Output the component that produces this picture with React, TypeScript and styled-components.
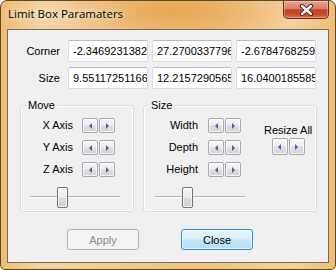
import React from "react";
import styled, { createGlobalStyle } from "styled-components";

const GlobalStyle = createGlobalStyle`
  html, body {
    margin: 0;
    padding: 0;
    background: #ffffff;
  }
  body {
    font-family: "Liberation Sans", Arial, sans-serif;
    font-size: 11px;
  }
`;

const S = {
  Window: styled.div`
    width: 336px;
    height: 270px;
    box-sizing: border-box;
    border: 1px solid #5e4626;
    border-radius: 7px 7px 5px 5px;
    overflow: hidden;
    display: flex;
    flex-direction: column;
    background:
      radial-gradient(ellipse 120px 34px at 172px 10px, rgba(230, 164, 80, 0.95), rgba(230, 164, 80, 0) 100%),
      linear-gradient(90deg, #eebc74 0%, #f4d3a4 12%, #f1c68b 45%, #f0c280 60%, #f4d0a0 88%, #eebc74 100%);
  `,
  TitleBar: styled.div`
    height: 28px;
    display: flex;
    align-items: flex-start;
    justify-content: space-between;
  `,
  Title: styled.span`
    font-family: "Open Sans", "Noto Sans", sans-serif;
    font-size: 11.5px;
    line-height: 14px;
    padding: 6px 0 0 7px;
    color: #000;
    text-shadow: 0 0 6px rgba(255, 248, 236, 0.95), 0 0 10px rgba(255, 248, 236, 0.8);
  `,
  CloseButton: styled.button`
    width: 46px;
    height: 18px;
    margin-right: 6px;
    padding: 0;
    box-sizing: border-box;
    border: 1px solid #6b2b1c;
    border-top: none;
    border-radius: 0 0 5px 5px;
    background: linear-gradient(#e9a895 0%, #d97c63 45%, #c3432a 52%, #c84a2e 78%, #e2704b 100%);
    box-shadow: inset 0 0 0 1px rgba(255, 255, 255, 0.3);
    display: flex;
    align-items: center;
    justify-content: center;
  `,
  Body: styled.div`
    flex: 1;
    display: flex;
    padding: 0 6px 6px;
  `,
  Client: styled.div`
    flex: 1;
    border: 1px solid #7c6a50;
    background: #f0f0f0;
    display: flex;
    flex-direction: column;
  `,
  CoordGrid: styled.div`
    display: grid;
    grid-template-columns: 50px 80px 80px 80px;
    column-gap: 4px;
    row-gap: 5px;
    margin: 10px 0 0 6px;
  `,
  FieldLabel: styled.span`
    align-self: center;
    text-align: right;
    padding-right: 4px;
    color: #000;
  `,
  Field: styled.input`
    width: 80px;
    height: 22px;
    box-sizing: border-box;
    border: 1px solid #d8dde4;
    border-top-color: #b8bcc4;
    border-radius: 2px;
    padding: 0 0 0 4px;
    margin: 0;
    background: #fff;
    color: #000;
    font-family: "Liberation Sans", Arial, sans-serif;
    font-size: 11px;
    outline: none;
  `,
  GroupRow: styled.div`
    display: flex;
    gap: 9px;
    margin: 9px 0 0 12px;
  `,
  Group: styled.fieldset<{ $width: number }>`
    margin: 0;
    padding: 0;
    min-width: 0;
    width: ${(p) => p.$width}px;
    height: 114px;
    box-sizing: border-box;
    border: 1px solid #d5dfe5;
    border-radius: 3px;
    box-shadow: inset 0 0 0 1px #ffffff;
  `,
  Legend: styled.legend`
    margin-left: 5px;
    padding: 0 2px;
    line-height: 14px;
    font-size: 11px;
    color: #000;
    background: #f0f0f0;
  `,
  GroupInner: styled.div<{ $pad: number }>`
    display: flex;
    padding: 6px 0 0 ${(p) => p.$pad}px;
  `,
  Column: styled.div`
    display: flex;
    flex-direction: column;
  `,
  AxisGrid: styled.div<{ $labelWidth: number; $gap: number }>`
    display: grid;
    grid-template-columns: ${(p) => p.$labelWidth}px auto;
    column-gap: ${(p) => p.$gap}px;
    row-gap: 7px;
    align-items: center;
  `,
  AxisLabel: styled.span`
    text-align: right;
    line-height: 15px;
    color: #000;
  `,
  SpinPair: styled.div`
    display: flex;
    gap: 1px;
  `,
  SpinButton: styled.button<{ $h: number }>`
    width: 16px;
    height: ${(p) => p.$h}px;
    box-sizing: border-box;
    padding: 0;
    border: 1px solid #a9a9a9;
    border-radius: 2px;
    background: linear-gradient(#f7f7f7, #ececec 48%, #dedede 52%, #d3d3d3);
    box-shadow: inset 0 0 0 1px rgba(255, 255, 255, 0.75);
    display: flex;
    align-items: center;
    justify-content: center;
  `,
  Arrow: styled.span<{ $dir: "left" | "right" }>`
    width: 0;
    height: 0;
    border-top: 3px solid transparent;
    border-bottom: 3px solid transparent;
    ${(p) =>
      p.$dir === "left"
        ? "border-right: 3px solid #4a5f9c;"
        : "border-left: 3px solid #4a5f9c;"}
  `,
  SliderBox: styled.div<{ $shift: number }>`
    position: relative;
    width: 90px;
    height: 21px;
    margin: 10px 0 0 ${(p) => p.$shift}px;
  `,
  Track: styled.div`
    margin-top: 9px;
    height: 1px;
    background: #b4b4b4;
    border-bottom: 1px solid #ffffff;
  `,
  Thumb: styled.div`
    position: absolute;
    top: 0;
    width: 11px;
    height: 21px;
    box-sizing: border-box;
    border: 1px solid #747474;
    border-radius: 2px;
    background: linear-gradient(#f6f6f6, #e9e9e9 50%, #dadada 52%, #d0d0d0);
    box-shadow: inset 0 0 0 1px rgba(255, 255, 255, 0.7);
  `,
  ResizeColumn: styled.div`
    display: flex;
    flex-direction: column;
    align-items: center;
    margin: 4px 0 0 19px;
  `,
  ResizeLabel: styled.span`
    line-height: 16px;
    white-space: nowrap;
    color: #000;
  `,
  ButtonRow: styled.div`
    display: flex;
    gap: 42px;
    margin: 17px 0 0 59px;
  `,
  DialogButton: styled.button<{ $primary?: boolean }>`
    width: 72px;
    height: 21px;
    box-sizing: border-box;
    padding: 0;
    border-radius: 3px;
    font-family: "Liberation Sans", Arial, sans-serif;
    font-size: 11px;
    border: 1px solid ${(p) => (p.$primary ? "#3c8bd0" : "#adb2b5")};
    color: ${(p) => (p.$primary ? "#000" : "#8a8a8a")};
    background: ${(p) =>
      p.$primary
        ? "linear-gradient(#e8f5fc, #d9effa 48%, #c3e5f7 52%, #b4ddf3)"
        : "#f4f4f4"};
    box-shadow: ${(p) =>
      p.$primary ? "inset 0 0 0 1px rgba(255,255,255,0.55)" : "none"};
  `,
};

const CloseGlyph = () => (
  <svg width="15" height="12" viewBox="0 0 15 12">
    <path d="M3 2 L12 10 M12 2 L3 10" stroke="#3b1a12" strokeWidth="4.2" strokeLinecap="round" />
    <path d="M3 2 L12 10 M12 2 L3 10" stroke="#ffffff" strokeWidth="2.4" strokeLinecap="round" />
  </svg>
);

const Spin = ({ h = 15 }: { h?: number }) => (
  <S.SpinPair>
    <S.SpinButton $h={h}>
      <S.Arrow $dir="left" />
    </S.SpinButton>
    <S.SpinButton $h={h}>
      <S.Arrow $dir="right" />
    </S.SpinButton>
  </S.SpinPair>
);

interface SliderProps {
  value: number;
  shift: number;
}

const Slider = ({ value, shift }: SliderProps) => (
  <S.SliderBox $shift={shift}>
    <S.Track />
    <S.Thumb style={{ left: Math.round(value * (90 - 11)) }} />
  </S.SliderBox>
);

const rows = [
  { label: "Corner", values: ["-2.346923138255", "27.27003377961", "-2.678476825934"] },
  { label: "Size", values: ["9.551172511662", "12.21572905651", "16.04001855851"] },
];

const App = () => {
  return (
    <>
      <GlobalStyle />
      <S.Window>
        <S.TitleBar>
          <S.Title>Limit Box Paramaters</S.Title>
          <S.CloseButton>
            <CloseGlyph />
          </S.CloseButton>
        </S.TitleBar>
        <S.Body>
          <S.Client>
            <S.CoordGrid>
              {rows.map((r) => (
                <React.Fragment key={r.label}>
                  <S.FieldLabel>{r.label}</S.FieldLabel>
                  {r.values.map((v, i) => (
                    <S.Field key={i} value={v} readOnly />
                  ))}
                </React.Fragment>
              ))}
            </S.CoordGrid>

            <S.GroupRow>
              <S.Group $width={114}>
                <S.Legend>Move</S.Legend>
                <S.GroupInner $pad={8}>
                  <S.Column>
                    <S.AxisGrid $labelWidth={44} $gap={9}>
                      {["X Axis", "Y Axis", "Z Axis"].map((l) => (
                        <React.Fragment key={l}>
                          <S.AxisLabel>{l}</S.AxisLabel>
                          <Spin />
                        </React.Fragment>
                      ))}
                    </S.AxisGrid>
                    <Slider value={0.34} shift={1} />
                  </S.Column>
                </S.GroupInner>
              </S.Group>

              <S.Group $width={174}>
                <S.Legend>Size</S.Legend>
                <S.GroupInner $pad={7}>
                  <S.Column>
                    <S.AxisGrid $labelWidth={47} $gap={10}>
                      {["Width", "Depth", "Height"].map((l) => (
                        <React.Fragment key={l}>
                          <S.AxisLabel>{l}</S.AxisLabel>
                          <Spin />
                        </React.Fragment>
                      ))}
                    </S.AxisGrid>
                    <Slider value={0.34} shift={4} />
                  </S.Column>
                  <S.ResizeColumn>
                    <S.ResizeLabel>Resize All</S.ResizeLabel>
                    <Spin h={17} />
                  </S.ResizeColumn>
                </S.GroupInner>
              </S.Group>
            </S.GroupRow>

            <S.ButtonRow>
              <S.DialogButton disabled>Apply</S.DialogButton>
              <S.DialogButton $primary>Close</S.DialogButton>
            </S.ButtonRow>
          </S.Client>
        </S.Body>
      </S.Window>
    </>
  );
};

export default App;
